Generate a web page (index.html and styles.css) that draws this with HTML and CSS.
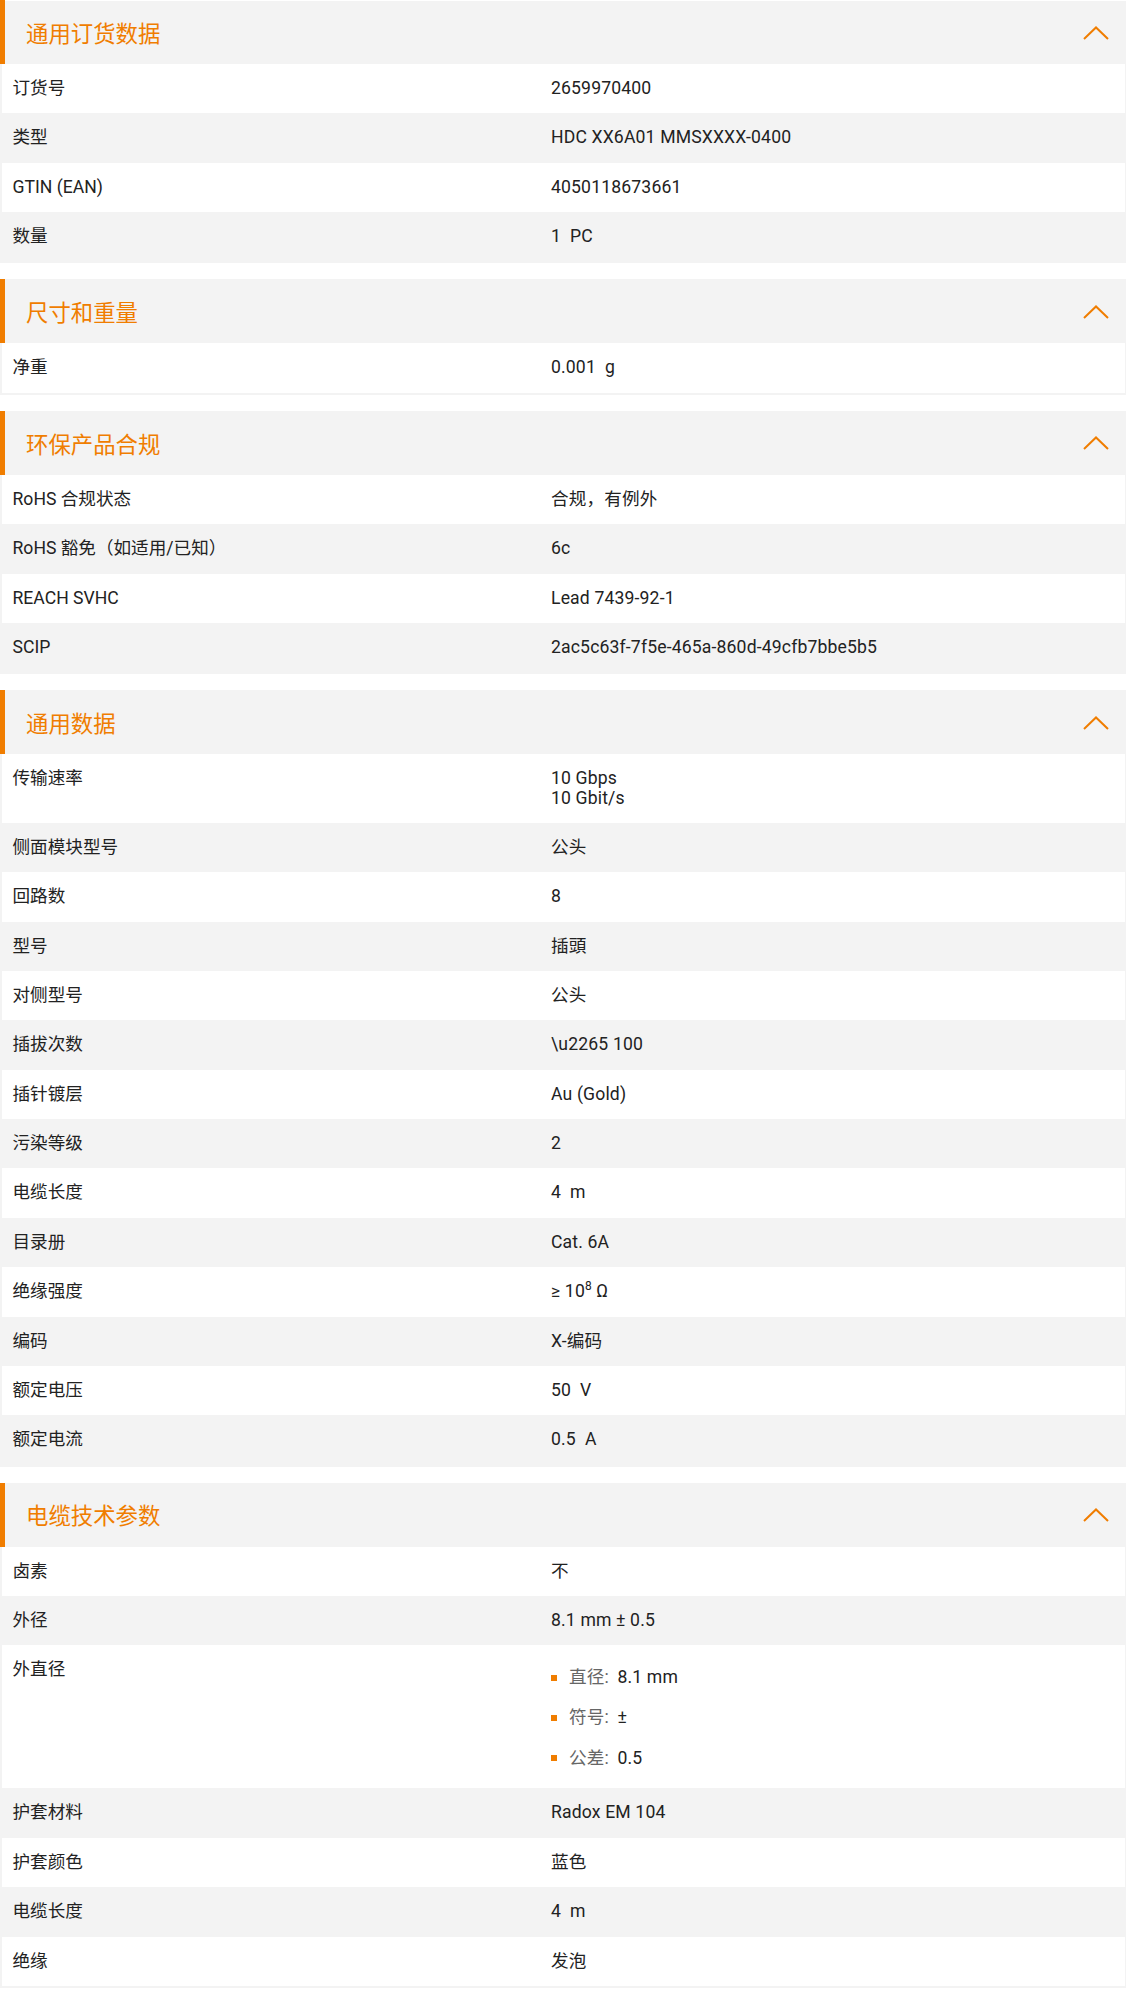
FILE: index.html
```html
<!DOCTYPE html>
<html lang="zh-CN">
<head>
<meta charset="utf-8">
<title>Product data</title>
<link rel="stylesheet" href="styles.css">
</head>
<body>
<div class="page">

  <section class="sec">
    <div class="head head-first">
      <h2 class="title">通用订货数据</h2>
      <svg class="chev" width="26" height="14" viewBox="0 0 26 14"><polyline points="1,13 13,1.5 25,13" fill="none" stroke="#f07d00" stroke-width="2"/></svg>
    </div>
    <div class="rows">
      <div class="row"><div class="label">订货号</div><div class="value">2659970400</div></div>
      <div class="row"><div class="label">类型</div><div class="value">HDC XX6A01 MMSXXXX-0400</div></div>
      <div class="row"><div class="label">GTIN (EAN)</div><div class="value">4050118673661</div></div>
      <div class="row"><div class="label">数量</div><div class="value">1&nbsp; PC</div></div>
    </div>
  </section>

  <section class="sec">
    <div class="head">
      <h2 class="title">尺寸和重量</h2>
      <svg class="chev" width="26" height="14" viewBox="0 0 26 14"><polyline points="1,13 13,1.5 25,13" fill="none" stroke="#f07d00" stroke-width="2"/></svg>
    </div>
    <div class="rows">
      <div class="row"><div class="label">净重</div><div class="value">0.001&nbsp; g</div></div>
    </div>
  </section>

  <section class="sec">
    <div class="head">
      <h2 class="title">环保产品合规</h2>
      <svg class="chev" width="26" height="14" viewBox="0 0 26 14"><polyline points="1,13 13,1.5 25,13" fill="none" stroke="#f07d00" stroke-width="2"/></svg>
    </div>
    <div class="rows">
      <div class="row"><div class="label">RoHS 合规状态</div><div class="value">合规，有例外</div></div>
      <div class="row"><div class="label">RoHS 豁免（如适用/已知）</div><div class="value">6c</div></div>
      <div class="row"><div class="label">REACH SVHC</div><div class="value">Lead 7439-92-1</div></div>
      <div class="row"><div class="label">SCIP</div><div class="value">2ac5c63f-7f5e-465a-860d-49cfb7bbe5b5</div></div>
    </div>
  </section>

  <section class="sec">
    <div class="head">
      <h2 class="title">通用数据</h2>
      <svg class="chev" width="26" height="14" viewBox="0 0 26 14"><polyline points="1,13 13,1.5 25,13" fill="none" stroke="#f07d00" stroke-width="2"/></svg>
    </div>
    <div class="rows">
      <div class="row"><div class="label">传输速率</div><div class="value">10 Gbps<br>10 Gbit/s</div></div>
      <div class="row"><div class="label">侧面模块型号</div><div class="value">公头</div></div>
      <div class="row"><div class="label">回路数</div><div class="value">8</div></div>
      <div class="row"><div class="label">型号</div><div class="value">插頭</div></div>
      <div class="row"><div class="label">对侧型号</div><div class="value">公头</div></div>
      <div class="row"><div class="label">插拔次数</div><div class="value">\u2265 100</div></div>
      <div class="row"><div class="label">插针镀层</div><div class="value">Au (Gold)</div></div>
      <div class="row"><div class="label">污染等级</div><div class="value">2</div></div>
      <div class="row"><div class="label">电缆长度</div><div class="value">4&nbsp; m</div></div>
      <div class="row"><div class="label">目录册</div><div class="value">Cat. 6A</div></div>
      <div class="row"><div class="label">绝缘强度</div><div class="value">≥ 10<sup class="sup">8</sup> Ω</div></div>
      <div class="row"><div class="label">编码</div><div class="value">X-编码</div></div>
      <div class="row"><div class="label">额定电压</div><div class="value">50&nbsp; V</div></div>
      <div class="row"><div class="label">额定电流</div><div class="value">0.5&nbsp; A</div></div>
    </div>
  </section>

  <section class="sec">
    <div class="head">
      <h2 class="title">电缆技术参数</h2>
      <svg class="chev" width="26" height="14" viewBox="0 0 26 14"><polyline points="1,13 13,1.5 25,13" fill="none" stroke="#f07d00" stroke-width="2"/></svg>
    </div>
    <div class="rows">
      <div class="row"><div class="label">卤素</div><div class="value">不</div></div>
      <div class="row"><div class="label">外径</div><div class="value">8.1 mm ± 0.5</div></div>
      <div class="row"><div class="label">外直径</div>
        <div class="value value-list">
          <ul class="bullets">
            <li class="bullet"><span class="key">直径:</span> 8.1 mm</li>
            <li class="bullet"><span class="key">符号:</span> ±</li>
            <li class="bullet"><span class="key">公差:</span> 0.5</li>
          </ul>
        </div>
      </div>
      <div class="row"><div class="label">护套材料</div><div class="value">Radox EM 104</div></div>
      <div class="row"><div class="label">护套颜色</div><div class="value">蓝色</div></div>
      <div class="row"><div class="label">电缆长度</div><div class="value">4&nbsp; m</div></div>
      <div class="row"><div class="label">绝缘</div><div class="value">发泡</div></div>
    </div>
  </section>

</div>
</body>
</html>
```

FILE: styles.css
```css
html, body {
  margin: 0;
  padding: 0;
  background: #fff;
}

body {
  font-family: Roboto, "Noto Sans CJK SC", sans-serif;
  font-size: 17.6px;
  color: #222;
}

.page {
  display: flex;
  flex-direction: column;
  gap: 16px;
}

.sec {
  background: #f3f3f3;
  padding: 0 1px 2px 0;
}

.head {
  height: 64px;
  box-sizing: border-box;
  display: flex;
  align-items: center;
  justify-content: space-between;
  border-left: 5px solid #f07d00;
  padding: 0 17px 0 21px;
  margin-right: -1px;
  background: #f3f3f3;
}

.head-first {
  background: linear-gradient(#fff 0, #fff 1px, #f3f3f3 1px);
}

.title {
  margin: 0;
  font-family: "Noto Sans CJK SC", sans-serif;
  font-weight: 400;
  font-size: 22.4px;
  line-height: 1;
  color: #f07d00;
}

.chev {
  display: block;
  margin-top: 1px;
}

.rows {
  padding-left: 2px;
}

.row {
  display: grid;
  grid-template-columns: 549px 1fr;
  background: #fff;
  line-height: 19.36px;
}

.row:nth-child(even) {
  background: #f3f3f3;
}

.label {
  padding: 15px 10px 15px 10.5px;
}

.value {
  padding: 15px 10px 15px 0;
  letter-spacing: 0.15px;
}

.sup {
  font-size: 0.68em;
  line-height: 0;
  vertical-align: 0.55em;
}

.value-list {
  padding: 12px 10px 10px 0;
}

.bullets {
  list-style: none;
  margin: 0;
  padding: 0;
}

.bullet {
  position: relative;
  padding: 10.5px 0 10.5px 18px;
}

.bullet::before {
  content: "";
  position: absolute;
  left: 0;
  top: 50%;
  width: 6px;
  height: 6px;
  margin-top: -3px;
  background: #f07d00;
}

.key {
  color: #666;
  margin-right: 4px;
}
```
